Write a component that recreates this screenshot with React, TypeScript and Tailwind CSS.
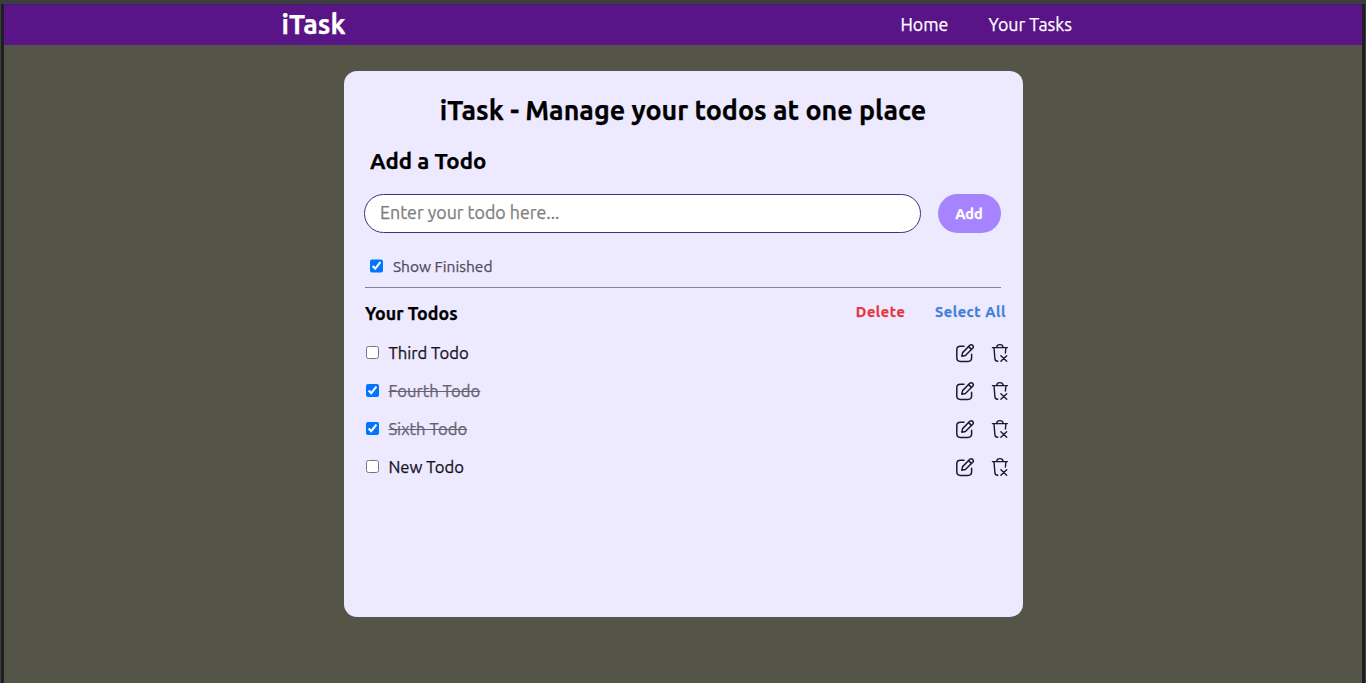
import React, { useState } from "react";

type Todo = { id: number; text: string; done: boolean };

const initialTodos: Todo[] = [
  { id: 3, text: "Third Todo", done: false },
  { id: 4, text: "Fourth Todo", done: true },
  { id: 6, text: "Sixth Todo", done: true },
  { id: 7, text: "New Todo", done: false },
];

function EditIcon() {
  return (
    <svg width="20" height="20" viewBox="0 0 20 20" fill="none" stroke="currentColor" strokeWidth="1.5" strokeLinecap="round" strokeLinejoin="round">
      <path d="M9 3.2H5.4Q1.8 3.2 1.8 6.8V14.8Q1.8 18.4 5.4 18.4H13Q16.6 18.4 16.6 14.8V11.2" />
      <path d="M6.8 13.2L7.6 9.6L14.8 2.3Q16.2 1.1 17.7 2.4Q19 3.9 17.7 5.3L10.4 12.5Z" />
      <path d="M13.6 3.6L16.4 6.4" />
    </svg>
  );
}

function TrashIcon() {
  return (
    <svg width="18" height="20" viewBox="0 0 18 20" fill="none" stroke="currentColor" strokeWidth="1.4" strokeLinecap="round" strokeLinejoin="round">
      <path d="M1.4 4.6H16.4" />
      <path d="M5.6 4.4Q5.9 1.6 8.9 1.6Q11.9 1.6 12.2 4.4" />
      <path d="M3 4.8L3.9 15.6Q4.1 18.2 6.8 18.2" />
      <path d="M14.9 4.8L14.4 10" />
      <path d="M9.9 12.7L15.7 18.2M15.7 12.7L9.9 18.2" />
    </svg>
  );
}

export default function App() {
  const [todos, setTodos] = useState<Todo[]>(initialTodos);
  const [showFinished, setShowFinished] = useState(true);
  const [draft, setDraft] = useState("");

  const toggle = (id: number) =>
    setTodos(todos.map((t) => (t.id === id ? { ...t, done: !t.done } : t)));
  const remove = (id: number) => setTodos(todos.filter((t) => t.id !== id));
  const add = () => {
    if (!draft.trim()) return;
    setTodos([...todos, { id: Date.now(), text: draft, done: false }]);
    setDraft("");
  };

  return (
    <div className="flex h-[683px] flex-col overflow-hidden bg-[#3d3c41] px-px pt-1 font-['Ubuntu','Noto_Sans',sans-serif] text-[17.8px] text-black [-webkit-text-stroke:0.25px]">
      <div className="flex grow flex-col border-r-3 border-l-3 border-[#1f1f20] bg-[#545447]">
        <nav className="flex h-[41px] shrink-0 items-center justify-between border-t border-[#3b2260] bg-[#591488] pr-[290px] pb-px pl-[277.5px] text-white">
          <span className="text-[26.8px] leading-none font-bold">iTask</span>
          <ul className="flex gap-10">
            <li>Home</li>
            <li>Your Tasks</li>
          </ul>
        </nav>

        <main className="mt-[26px] ml-[340px] flex h-[546px] w-[679px] flex-col rounded-[13px] bg-[#ede9fe] pr-[22px] pl-5">
          <h1 className="mt-[21px] pl-px text-center text-[26.8px] leading-9 font-bold">iTask - Manage your todos at one place</h1>
          <h2 className="mt-[17px] pl-1.5 text-[22.2px] leading-[31px] font-bold">Add a Todo</h2>

          <div className="mt-[18px] flex h-[39px] gap-[17px]">
            <input
              className="w-[557px] rounded-full border border-[#432f83] bg-white px-[15px] pb-0.5 placeholder:text-[#7d7d80]"
              placeholder="Enter your todo here..."
              value={draft}
              onChange={(e) => setDraft(e.target.value)}
            />
            <button onClick={add} className="w-[63px] rounded-full bg-[#a684ff] pr-px text-[14.5px] font-bold text-white">Add</button>
          </div>

          <label className="mt-[22px] flex h-[23px] items-center gap-[9.5px] pl-1.5 text-[15.55px] text-[#504d5b]">
            <input type="checkbox" className="-mt-px size-[13.4px]" checked={showFinished} onChange={() => setShowFinished(!showFinished)} />
            Show Finished
          </label>
          <div className="mt-[9px] ml-px h-px bg-[#8583a0]" />

          <div className="mt-[11px] -mr-1 flex h-7 items-center justify-between pl-px">
            <h3 className="font-bold">Your Todos</h3>
            <div className="-mr-px flex gap-[29.5px] pb-0.5 text-[14.5px] font-bold tracking-[0.6px]">
              <button className="text-[#e43540]">Delete</button>
              <button className="text-[#3d80d8]">Select All</button>
            </div>
          </div>

          <ul className="mt-[7px] -mr-2 flex flex-col">
            {todos
              .filter((t) => showFinished || !t.done)
              .map((t) => (
                <li key={t.id} className="flex h-[38px] items-center justify-between pl-[1.5px] text-[16.66px]">
                  <label className="flex items-center gap-[9.5px]">
                    <input type="checkbox" className="-mt-px size-[13.4px]" checked={t.done} onChange={() => toggle(t.id)} />
                    <span className={t.done ? "text-[#66636f] line-through" : "text-[#15131c]"}>{t.text}</span>
                  </label>
                  <div className="flex gap-4 text-[#1b1930]">
                    <button aria-label="Edit"><EditIcon /></button>
                    <button aria-label="Remove" onClick={() => remove(t.id)}><TrashIcon /></button>
                  </div>
                </li>
              ))}
          </ul>
        </main>
      </div>
    </div>
  );
}
